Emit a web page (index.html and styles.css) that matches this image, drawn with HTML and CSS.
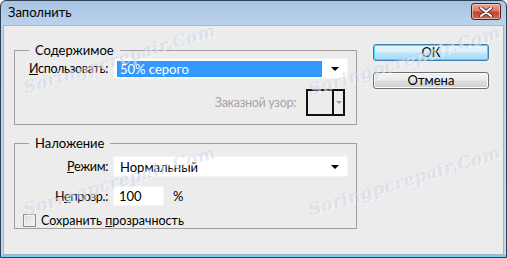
FILE: index.html
```html
<!DOCTYPE html>
<html lang="ru">
<head>
<meta charset="utf-8">
<link rel="stylesheet" href="styles.css">
</head>
<body>
<div class="window">
  <div class="titlebar">
    <span class="title">Заполнить</span>
    <div class="close">
      <svg width="16" height="10" viewBox="0 0 16 10"><path d="M3 1 L13 9 M13 1 L3 9" stroke="#5a2a22" stroke-width="3.6" stroke-linecap="round"/><path d="M3 1 L13 9 M13 1 L3 9" stroke="#fff" stroke-width="2" stroke-linecap="round"/></svg>
    </div>
  </div>
  <div class="client">
    <div class="groups">
      <fieldset class="group g1">
        <legend>Содержимое</legend>
        <div class="row">
          <label class="lbl"><u>И</u>спользовать:</label>
          <div class="select focused"><span class="sel-text">50% серого</span><span class="arrow"></span></div>
        </div>
        <div class="row pattern-row">
          <span class="lbl disabled">Заказной узор:</span>
          <div class="pattern"><span class="swatch"></span><span class="parrow"></span></div>
        </div>
      </fieldset>
      <fieldset class="group g2">
        <legend>Наложение</legend>
        <div class="row r-mode">
          <label class="lbl"><u>Р</u>ежим:</label>
          <div class="select"><span class="sel-text">Нормальный</span><span class="arrow"></span></div>
        </div>
        <div class="row r-opac">
          <label class="lbl">Н<u>е</u>прозр.:</label>
          <div class="input">100</div>
          <span class="pct">%</span>
        </div>
        <div class="row r-check">
          <span class="checkbox"></span>
          <span class="chk-label">Сохранить <u>п</u>розрачность</span>
        </div>
      </fieldset>
    </div>
    <div class="buttons">
      <div class="btn default">ОК</div>
      <div class="btn">Отмена</div>
    </div>
    <span class="wm w1">Soringpcrepair.Com</span>
    <span class="wm w2">Soringpcrepair.Com</span>
    <span class="wm w3">Soringpcrepair.Com</span>
    <span class="wm w4">Soringpcrepair.Com</span>
  </div>
</div>
</body>
</html>
```
FILE: styles.css
```css
* { box-sizing: border-box; }
html, body { margin: 0; padding: 0; }
body {
  width: 507px; height: 258px; overflow: hidden;
  font-family: Lato, "Noto Sans", sans-serif;
  font-size: 12.5px; color: #000;
}
.window {
  width: 507px; height: 258px;
  border: 1px solid #2f3f52;
  border-radius: 6px 6px 0 0;
  background: linear-gradient(#a8c4e4, #bcd3ec 25px, #c3d9ef);
  display: flex; flex-direction: column;
  padding: 0 2px 2px 2px;
  box-shadow: inset 0 -2px 0 #6fd0ef;
}
.titlebar {
  height: 24px; flex: none;
  display: flex; align-items: center; justify-content: space-between;
  padding: 0 3px 0 5px;
}
.title { font-size: 13px; color: #000; line-height: 1; margin-top: -1px; }
.close {
  width: 30px; height: 17px; margin-top: -3px;
  border: 1px solid #5b2019;
  border-radius: 3px;
  background: linear-gradient(#e8a89a 0%, #d77d69 45%, #c0432c 55%, #cd6a52 100%);
  box-shadow: inset 0 0 0 1px rgba(255,220,210,0.6);
  display: flex; align-items: center; justify-content: center;
}
.client {
  flex: 1; position: relative;
  background: #ececec;
  border: 1px solid #9fb6d0;
  display: flex;
  padding: 17px 0 0 10px;
  overflow: hidden;
}
.groups { width: 343px; display: flex; flex-direction: column; gap: 11px; }
.group {
  margin: 0; padding: 0;
  border: 1px solid #a0a0a0;
  border-radius: 0;
  position: relative;
}
.group legend {
  margin-left: 14px; padding: 0 6px;
  font-size: 13px; line-height: 14px;
}
.g1 { height: 82px; padding: 1px 8px 0 0; }
.g2 { height: 93px; padding: 1px 8px 0 0; }
.row { display: flex; align-items: center; }
.lbl { width: 98px; text-align: right; padding-right: 5px; flex: none; letter-spacing: -0.3px; }
.lbl u, .chk-label u { text-decoration: underline; text-underline-offset: 1px; }
.disabled { color: #a6a6a6; }
.select {
  flex: 1; height: 21px; background: #fff;
  border: 1px solid #f4f4f4;
  display: flex; align-items: center;
  padding: 0 8px 0 3px;
}
.sel-text { flex: 1; padding-left: 3px; line-height: 16px; font-size: 13px; }
.focused .sel-text {
  background: #3399ff; color: #fff; height: 16px;
  outline: 1px dotted #b07a20; outline-offset: -1px;
}
.arrow {
  width: 0; height: 0; margin-left: 9px;
  border-left: 4px solid transparent; border-right: 4px solid transparent;
  border-top: 4px solid #000;
}
.pattern-row { justify-content: flex-end; margin-top: 10px; padding-right: 3px; }
.pattern-row .lbl { width: auto; padding-right: 10px; }
.pattern {
  width: 39px; height: 27px; border: 2px solid #111;
  display: flex;
}
.swatch { width: 26px; border-right: 2px solid #111; }
.parrow {
  flex: 1; display: flex; align-items: center; justify-content: center;
}
.parrow::after {
  content: ""; width: 0; height: 0;
  border-left: 3px solid transparent; border-right: 3px solid transparent;
  border-top: 3px solid #a0a0a0;
}
.r-mode { margin-top: 5px; }
.r-opac { margin-top: 9px; }
.input {
  width: 51px; height: 20px; background: #fff;
  border: 1px solid #f4f4f4; padding-left: 5px; line-height: 18px; font-size: 13px;
}
.pct { margin-left: 9px; font-size: 13px; }
.r-check { margin-top: 7px; padding-left: 8px; }
.checkbox {
  width: 13px; height: 13px; border: 1px solid #8e8f8f;
  background: linear-gradient(135deg, #dcdcdc, #f6f6f6);
  box-shadow: inset 0 0 0 1px #f0f0f0;
  margin-right: 5px;
}
.buttons {
  margin-left: 16px; margin-top: 1px;
  display: flex; flex-direction: column; gap: 11px;
}
.btn {
  width: 116px; height: 17px;
  border: 1px solid #707070; border-radius: 3px;
  background: linear-gradient(#f2f2f2 0%, #ebebeb 48%, #dddddd 52%, #cfcfcf 100%);
  text-align: center; line-height: 15px; font-size: 13px;
  box-shadow: inset 0 0 0 1px #fcfcfc;
}
.btn.default {
  border-color: #3c7fb1;
  background: linear-gradient(#eaf6fd 0%, #d9f0fc 48%, #bee6fd 52%, #a7d9f5 100%);
  box-shadow: inset 0 0 0 1px #48d4fb;
}
.wm {
  position: absolute;
  font-family: "DejaVu Serif", serif;
  font-style: italic; font-weight: bold;
  font-size: 17px; letter-spacing: 0.5px;
  color: rgba(175, 190, 220, 0.32);
  text-shadow: 1px 1px 0 rgba(255,255,255,0.5);
  transform: rotate(-17deg);
  transform-origin: left center;
  white-space: nowrap;
  pointer-events: none;
}
.w1 { left: 20px; top: 52px; }
.w2 { left: 305px; top: 54px; }
.w3 { left: 20px; top: 174px; }
.w4 { left: 305px; top: 174px; }
```
